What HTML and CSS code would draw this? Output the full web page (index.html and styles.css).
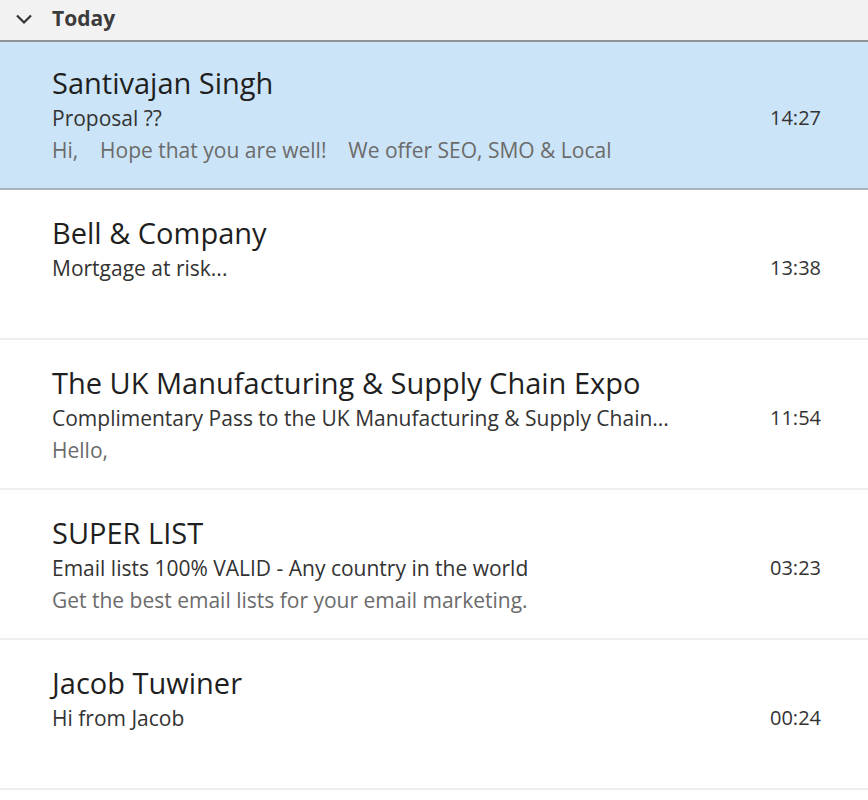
FILE: index.html
```html
<!DOCTYPE html>
<html>
<head>
<meta charset="utf-8">
<link rel="stylesheet" href="styles.css">
</head>
<body>
<div class="list">
  <div class="group-header">
    <svg class="chev" width="18" height="12" viewBox="0 0 18 12"><path d="M2 2.5 L9 9.5 L16 2.5" fill="none" stroke="#333" stroke-width="2.2"/></svg>
    <span class="group-title">Today</span>
  </div>
  <div class="mail selected">
    <div class="name">Santivajan Singh</div>
    <div class="subline"><span class="subject">Proposal ??</span><span class="time">14:27</span></div>
    <div class="preview">Hi,&nbsp;&nbsp;&nbsp; Hope that you are well!&nbsp;&nbsp;&nbsp; We offer SEO, SMO &amp; Local</div>
  </div>
  <div class="mail">
    <div class="name">Bell &amp; Company</div>
    <div class="subline"><span class="subject">Mortgage at risk...</span><span class="time">13:38</span></div>
    <div class="preview"></div>
  </div>
  <div class="mail">
    <div class="name">The UK Manufacturing &amp; Supply Chain Expo</div>
    <div class="subline"><span class="subject">Complimentary Pass to the UK Manufacturing &amp; Supply Chain...</span><span class="time">11:54</span></div>
    <div class="preview">Hello,</div>
  </div>
  <div class="mail">
    <div class="name">SUPER LIST</div>
    <div class="subline"><span class="subject">Email lists 100% VALID - Any country in the world</span><span class="time">03:23</span></div>
    <div class="preview">Get the best email lists for your email marketing.</div>
  </div>
  <div class="mail">
    <div class="name">Jacob Tuwiner</div>
    <div class="subline"><span class="subject">Hi from Jacob</span><span class="time">00:24</span></div>
    <div class="preview"></div>
  </div>
</div>
</body>
</html>
```
FILE: styles.css
```css
html, body {
  margin: 0;
  padding: 0;
  background: #ffffff;
}
body {
  font-family: "Open Sans", "Noto Sans", sans-serif;
  width: 868px;
  height: 800px;
  overflow: hidden;
}
.group-header {
  background: #f2f2f2;
  border-bottom: 2px solid #8e9396;
  display: flex;
  align-items: center;
  padding-left: 15px;
  box-sizing: border-box;
  height: 42px;
}
.chev {
  margin-right: 19px;
  margin-top: -3px;
}
.group-title {
  font-size: 21px;
  font-weight: 700;
  color: #3b3b3b;
  margin-top: -4px;
}
.mail {
  height: 150px;
  box-sizing: border-box;
  border-bottom: 2px solid #eeeeee;
  padding: 23px 47px 0 52px;
  display: flex;
  flex-direction: column;
}
.mail.selected {
  height: 148px;
  background: #cce4f7;
  border-bottom: 2px solid #a9b4bb;
  padding-top: 21px;
}
.name {
  font-size: 29px;
  color: #1f1f1f;
  line-height: 40px;
  height: 40px;
}
.subline {
  display: flex;
  justify-content: space-between;
  align-items: center;
  height: 29px;
}
.subject {
  font-size: 21px;
  color: #333;
}
.time {
  font-size: 20px;
  color: #333;
}
.preview {
  font-size: 21px;
  color: #6b6b6b;
  line-height: 36px;
  height: 36px;
}
```
